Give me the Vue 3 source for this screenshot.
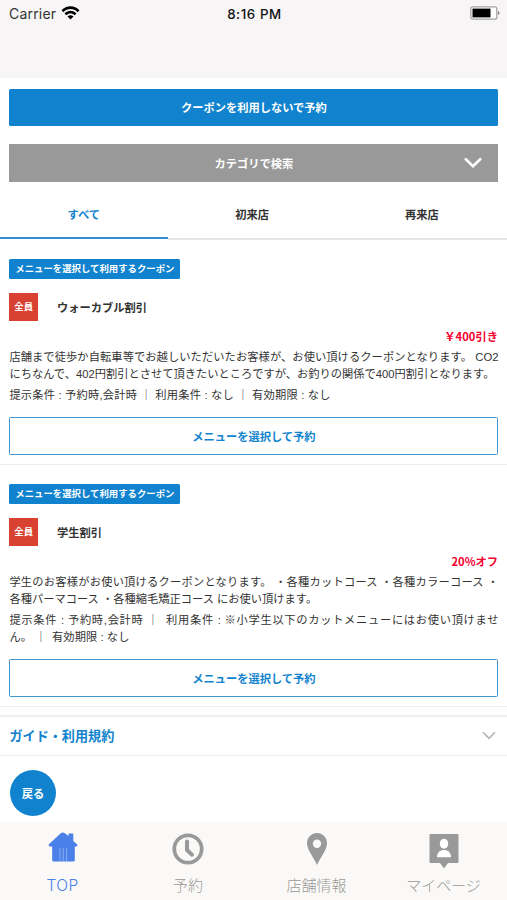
<script setup>
const tabs = ['すべて', '初来店', '再来店']
const coupons = [
  {
    title: 'ウォーカブル割引',
    price: '￥400引き',
    body: [
      { text: '店舗まで徒歩か自転車等でお越しいただいたお客様が、お使い頂けるクーポンとなります。 CO2', width: 489 },
      { text: 'にちなんで、402円割引とさせて頂きたいところですが、お釣りの関係で400円割引となります。', width: 485 },
    ],
    terms: [{ text: '提示条件 : 予約時,会計時 ｜ 利用条件 : なし ｜ 有効期限 : なし', width: 321 }],
  },
  {
    title: '学生割引',
    price: '20%オフ',
    body: [
      { text: '学生のお客様がお使い頂けるクーポンとなります。 ・各種カットコース ・各種カラーコース ・', width: 489 },
      { text: '各種パーマコース ・各種縮毛矯正コース にお使い頂けます。', width: 306 },
    ],
    terms: [
      { text: '提示条件 : 予約時,会計時 ｜ \u2009利用条件 : ※小学生以下のカットメニューにはお使い頂けませ', width: 489 },
      { text: 'ん。 ｜ \u2009有効期限 : なし', width: 120 },
    ],
  },
]
</script>

<template>
  <div class="screen" lang="ja">
    <header class="status">
      <div class="carrier">
        <span>Carrier</span>
        <svg class="wifi" viewBox="0 0 18 14">
          <path d="M0 4.3C5-1.1 13-1.1 18 4.3L16.2 6.2C12.2 2 5.8 2 1.8 6.2Z" />
          <path d="M3 7.4C6.4 3.9 11.6 3.9 15 7.4L13.2 9.2C10.8 6.8 7.2 6.8 4.8 9.2Z" />
          <path d="M6 10.4C7.8 8.8 10.2 8.8 12 10.4L9 13.4Z" />
        </svg>
      </div>
      <span class="clock">8:16 PM</span>
      <svg class="battery" viewBox="0 0 30 14">
        <rect x="0.8" y="0.8" width="26" height="12.4" rx="2" fill="#fff" stroke="#a5a3a4" stroke-width="1.3" />
        <rect x="2.5" y="2.6" width="18" height="8.8" fill="#000" />
        <path d="M28 5v4q1.6-.8 1.6-2T28 5Z" fill="#858384" />
      </svg>
    </header>

    <main>
      <button class="primary">クーポンを利用しないで予約</button>
      <button class="category">
        カテゴリで検索
        <svg class="chev" viewBox="0 0 18 12"><path d="M1.8 2.2 9 9.2 16.2 2.2" /></svg>
      </button>

      <nav class="tabs">
        <div v-for="(t, i) in tabs" :key="t" class="tab" :class="{ active: i === 0 }">{{ t }}</div>
      </nav>

      <section v-for="c in coupons" :key="c.title" class="coupon">
        <span class="kind">メニューを選択して利用するクーポン</span>
        <div class="head">
          <span class="target">全員</span>
          <h2>{{ c.title }}</h2>
        </div>
        <div class="price">{{ c.price }}</div>
        <div class="text">
          <p v-for="l in c.body" :key="l.text" :style="{ width: l.width + 'px' }">{{ l.text }}</p>
        </div>
        <div class="text terms">
          <p v-for="l in c.terms" :key="l.text" :style="{ width: l.width + 'px' }">{{ l.text }}</p>
        </div>
        <button class="outline">メニューを選択して予約</button>
      </section>

      <div class="guide">
        <span>ガイド・利用規約</span>
        <svg viewBox="0 0 14 9"><path d="M1 1.2 7 7.4 13 1.2" /></svg>
      </div>
      <button class="back">戻る</button>
    </main>

    <footer class="bar">
      <div class="item on">
        <svg class="home" viewBox="0 0 30 30">
          <path d="M15 0.5Q16.4.5 18 2L20.5 4.3V2.2Q20.5 1.5 21.2 1.5H24.6Q25.3 1.5 25.3 2.2V9L29 12.2Q30 13.4 28.8 14.2L26.8 14.7V28Q26.8 29.5 25.3 29.5H5.7Q4.2 29.5 4.2 28V14.7L1.3 14.2Q-.2 13.2 1.2 12L12.5 1.6Q13.7.5 15 .5Z" fill="#4a80e8" />
          <path d="M12 16V29M15.3 16V29M18.6 16V29" stroke="#8fb0f1" stroke-width="0.9" />
        </svg>
        <span>TOP</span>
      </div>
      <div class="item">
        <svg class="time" viewBox="0 0 32 32">
          <circle cx="16" cy="16" r="13.7" fill="none" stroke="#999" stroke-width="3.7" />
          <path d="M15 8.5V17L20 21.7" fill="none" stroke="#999" stroke-width="4" stroke-linecap="round" stroke-linejoin="round" />
        </svg>
        <span>予約</span>
      </div>
      <div class="item">
        <svg class="pin" viewBox="0 0 20 32">
          <path fill-rule="evenodd" fill="#999" d="M10 0C4.4 0 0 4.4 0 10.2C0 17 6 23 10 32C14 23 20 17 20 10.2C20 4.4 15.6 0 10 0ZM10 6.5a4.2 4.2 0 1 1 0 8.4a4.2 4.2 0 0 1 0-8.4Z" />
        </svg>
        <span>店舗情報</span>
      </div>
      <div class="item">
        <svg class="user" viewBox="0 0 30 35">
          <path d="M1.5 0H28.5Q29.5 0 29.5 1V28Q29.5 29 28.5 29H19L15 34.5 11 29H1.5Q.5 29 .5 28V1Q.5 0 1.5 0Z" fill="#999" />
          <ellipse cx="15" cy="9.7" rx="4.2" ry="5" fill="#fff" />
          <path d="M8 23.3C8 18.5 11 16 15 16S22 18.5 22 23.3Z" fill="#fff" />
        </svg>
        <span>マイページ</span>
      </div>
    </footer>
  </div>
</template>

<style>
body {
  margin: 0;
  background: #fff;
}
</style>

<style scoped>
* {
  box-sizing: border-box;
}
.screen {
  width: 507px;
  height: 900px;
  display: flex;
  flex-direction: column;
  overflow: hidden;
  background: #fff;
  color: #333;
  font-family: "Liberation Sans", "Noto Sans CJK JP", sans-serif;
  font-size: 11.25px;
}
button {
  display: block;
  margin: 0;
  padding: 0;
  border: 0;
  font: bold 11.25px "Noto Sans CJK JP", sans-serif;
}
.status {
  flex: none;
  height: 78px;
  padding: 5px 7px 0 9px;
  display: grid;
  grid-template-columns: 1fr auto 1fr;
  align-items: start;
  background: #f7f5f6;
  font: 14px/18px Inter, sans-serif;
  letter-spacing: 0.2px;
}
.carrier {
  display: flex;
  gap: 5px;
}
.wifi {
  width: 19px;
  height: 14px;
  margin-top: 1px;
  fill: #000;
}
.clock {
  color: #111;
  font-weight: 500;
  font-size: 13.3px;
  letter-spacing: 0.6px;
}
.battery {
  justify-self: end;
  width: 30px;
  height: 14px;
  margin-top: 1px;
}
main {
  flex: 1;
  min-height: 0;
}
.primary {
  width: 489px;
  height: 37px;
  margin: 10.5px 0 0 9.4px;
  border-radius: 1.5px;
  background: #1183ce;
  color: #fff;
}
.category {
  width: 489px;
  height: 38px;
  margin: 18.5px 0 0 9.4px;
  padding: 0 16px 0 34px;
  display: grid;
  grid-template-columns: 1fr auto;
  align-items: center;
  background: #999;
  color: #fff;
}
.chev {
  width: 18px;
  height: 12px;
  fill: none;
  stroke: #fff;
  stroke-width: 2.6;
  stroke-linecap: round;
}
.tabs {
  height: 58px;
  display: grid;
  grid-template-columns: 167.5px 169.5px 170px;
  font: bold 11.25px/64px "Noto Sans CJK JP", sans-serif;
  text-align: center;
}
.tab {
  height: 58px;
  border-bottom: 2px solid #e6e6e6;
}
.tab.active {
  height: 57px;
  color: #1183ce;
  border-color: #2f8fd0;
}
.coupon {
  padding: 19px 9px 9px 9.4px;
  border-bottom: 1.5px solid #eee;
}
.coupon + .coupon {
  padding-top: 19.5px;
}
.kind {
  display: block;
  width: 171px;
  height: 20px;
  border-radius: 1.5px;
  background: #1183ce;
  color: #fff;
  text-align: center;
  font: bold 9.4px/19px "Noto Sans CJK JP", sans-serif;
  white-space: nowrap;
}
.head {
  display: flex;
  align-items: center;
  gap: 19px;
  margin-top: 14px;
  height: 28px;
}
.target {
  width: 28.5px;
  height: 28.5px;
  background: #d94231;
  color: #fff;
  text-align: center;
  font: bold 9.4px/27px "Noto Sans CJK JP", sans-serif;
}
h2 {
  margin: 0;
  font: bold 11.25px/26px "Noto Sans CJK JP", sans-serif;
}
.price {
  margin-top: 5px;
  height: 20px;
  color: #f5002f;
  text-align: right;
  font: bold 11.25px/20px "Noto Sans CJK JP", sans-serif;
}
.text {
  margin-top: 3px;
}
.text p {
  margin: 0;
  height: 17px;
  line-height: 17px;
  white-space: nowrap;
  text-align: justify;
  text-align-last: justify;
}
.text.terms {
  margin-top: 4px;
}
.outline {
  width: 489px;
  height: 38px;
  margin-top: 12.5px;
  border: 1.3px solid #4095d1;
  border-radius: 1.5px;
  background: #fff;
  color: #1183ce;
}
.guide {
  height: 41px;
  margin-top: 8px;
  padding: 0 11px 1px 9.5px;
  display: flex;
  align-items: center;
  justify-content: space-between;
  border-top: 2px solid #eee;
  border-bottom: 1.5px solid #eee;
  color: #1183ce;
  font: bold 13.1px "Noto Sans CJK JP", sans-serif;
}
.guide svg {
  width: 14px;
  height: 9px;
  fill: none;
  stroke: #b5b5b5;
  stroke-width: 1.6;
}
.back {
  width: 46px;
  height: 46px;
  margin: 14px 0 0 10px;
  border-radius: 50%;
  background: #1183ce;
  color: #fff;
}
.bar {
  flex: none;
  height: 78px;
  display: grid;
  grid-template-columns: 125px 126px 131px 123px;
  background: #faf9f7;
}
.item {
  display: flex;
  flex-direction: column;
  align-items: center;
  color: #999;
  font: 300 15px/22px "Noto Sans CJK JP", sans-serif;
  white-space: nowrap;
}
.item.on {
  color: #4a80e8;
  font-family: Inter, sans-serif;
  font-size: 15.5px;
  letter-spacing: 0.4px;
}
.item svg {
  flex: none;
}
.item span {
  margin-top: auto;
  margin-bottom: 4px;
}
.item.on span {
  margin-bottom: 3px;
}
.home {
  width: 30px;
  height: 30px;
  margin-top: 10px;
}
.time {
  width: 32px;
  height: 32px;
  margin-top: 11px;
}
.pin {
  width: 20px;
  height: 32px;
  margin-top: 11px;
}
.user {
  width: 30px;
  height: 35px;
  margin-top: 12px;
}
</style>
